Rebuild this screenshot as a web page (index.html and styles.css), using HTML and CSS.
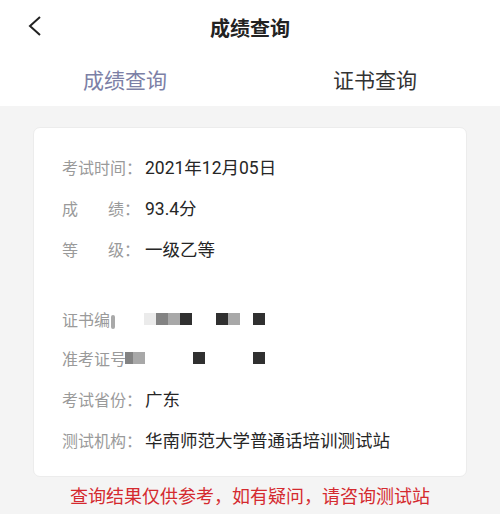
FILE: index.html
```html
<html>
    <head>
        <title>成绩查询</title>
        <link rel="stylesheet" href="styles.css">
    </head>
    <body>
        <div class="top">
            <div class="nav-bar">
                <svg class="back" width="16" height="22" viewBox="0 0 16 22">
                    <path d="M13 2 L3 11 L13 20" fill="none" stroke="#222" stroke-width="2"/>
                </svg>
                <h1>成绩查询</h1>
            </div>
            <div class="tabs">
                <div class="tab active">成绩查询</div>
                <div class="tab">证书查询</div>
            </div>
        </div>
        <div class="content">
            <div class="card">
                <div class="row"><span class="label">考试时间：</span><span class="value">2021年12月05日</span></div>
                <div class="row"><span class="label spread"><i>成</i><i>绩：</i></span><span class="value">93.4分</span></div>
                <div class="row"><span class="label spread"><i>等</i><i>级：</i></span><span class="value">一级乙等</span></div>
                <div class="row masked first-masked">
                    <span class="label">证书编<b class="cut"></b></span>
                    <span class="blocks">
                        <b class="px c1"></b><b class="px c2"></b><b class="px c3"></b><b class="px c4"></b>
                        <b class="px gap2"></b><b class="px c4"></b><b class="px c3"></b>
                        <b class="px gap1"></b><b class="px c4"></b>
                    </span>
                </div>
                <div class="row masked">
                    <span class="label short">准考证号</span>
                    <span class="blocks">
                        <b class="px c2 half"></b><b class="px c3"></b>
                        <b class="px gap4"></b><b class="px c4"></b>
                        <b class="px gap4"></b><b class="px c4"></b>
                    </span>
                </div>
                <div class="row"><span class="label">考试省份：</span><span class="value">广东</span></div>
                <div class="row"><span class="label">测试机构：</span><span class="value">华南师范大学普通话培训测试站</span></div>
            </div>
            <p class="notice">查询结果仅供参考，如有疑问，请咨询测试站</p>
        </div>
    </body>
</html>
```

FILE: styles.css
```css
body{
    margin: 0;
    background-color: #f4f4f4;
    font-family: Roboto, 'Noto Sans CJK SC', sans-serif;
    color: #222;
}
.top{
    background-color: white;
    height: 106px;
}
.nav-bar{
    display: flex;
    justify-content: center;
    align-items: center;
    height: 55px;
    position: relative;
}
.back{
    position: absolute;
    left: 27px;
    top: 15px;
}
h1{
    margin: 0;
    font-size: 20px;
    font-weight: bold;
    color: #222;
}
.tabs{
    display: flex;
    height: 51px;
    align-items: center;
}
.tab{
    flex: 1;
    text-align: center;
    font-size: 21px;
    color: #333;
    padding-bottom: 3px;
}
.tab.active{
    color: #7c80a6;
}
.content{
    padding: 21px 33px 0 33px;
}
.card{
    background-color: white;
    border: 1px solid #ececec;
    border-radius: 7px;
    padding: 18px 28px 16px 28px;
}
.row{
    display: flex;
    align-items: center;
    height: 41px;
    font-size: 16px;
}
.label{
    color: #9a9a9a;
    width: 83px;
    flex-shrink: 0;
    white-space: nowrap;
}
.spread{
    display: flex;
    justify-content: space-between;
    padding-right: 5px;
    width: 78px;
}
.spread i{
    font-style: normal;
}
.value{
    color: #262626;
    font-size: 17.5px;
}
.first-masked{
    margin-top: 31px;
    height: 37px;
}
.masked .label{
    display: flex;
    align-items: center;
}
.label.short{
    width: 64px;
}
.cut{
    display: inline-block;
    width: 4px;
    height: 14px;
    margin-left: 1px;
    margin-top: 6px;
    background-color: #a9a9a9;
    border-radius: 2px;
}
.blocks{
    display: flex;
    margin-left: -1px;
}
.px{
    display: block;
    width: 12px;
    height: 12px;
}
.c1{ background-color: #ebebeb; }
.c2{ background-color: #838383; }
.c3{ background-color: #a8a8a8; }
.c4{ background-color: #303030; }
.half{ width: 8px; }
.gap1{ width: 13px; }
.gap2{ width: 24px; }
.gap4{ width: 48px; }
.notice{
    margin: 7px 0 0 0;
    text-align: center;
    font-size: 18px;
    line-height: 26px;
    color: #d42a2f;
}
```
